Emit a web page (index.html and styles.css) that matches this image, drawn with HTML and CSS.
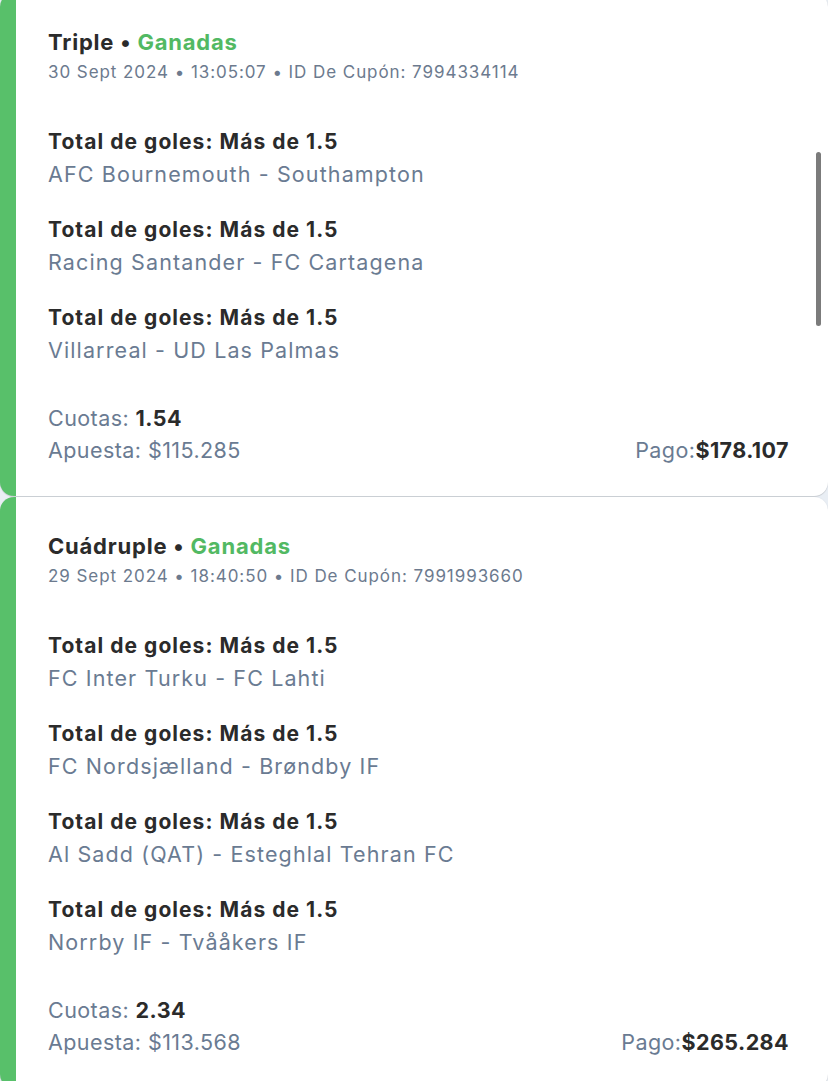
FILE: index.html
```html
<!DOCTYPE html>
<html lang="es">
<head>
<meta charset="utf-8">
<link rel="stylesheet" href="styles.css">
</head>
<body>
<div class="list">
  <section class="card">
    <h2 class="title">Triple • <span class="won">Ganadas</span></h2>
    <p class="meta">30 Sept 2024 • 13:05:07 • ID De Cupón: 7994334114</p>
    <div class="sels">
      <div class="sel"><div class="market">Total de goles: Más de 1.5</div><div class="event">AFC Bournemouth - Southampton</div></div>
      <div class="sel"><div class="market">Total de goles: Más de 1.5</div><div class="event">Racing Santander - FC Cartagena</div></div>
      <div class="sel"><div class="market">Total de goles: Más de 1.5</div><div class="event">Villarreal - UD Las Palmas</div></div>
    </div>
    <div class="foot">
      <div class="line">Cuotas: <b>1.54</b></div>
      <div class="row"><span class="line">Apuesta: $115.285</span><span class="line">Pago:<b>$178.107</b></span></div>
    </div>
  </section>
  <section class="card">
    <h2 class="title">Cuádruple • <span class="won">Ganadas</span></h2>
    <p class="meta">29 Sept 2024 • 18:40:50 • ID De Cupón: 7991993660</p>
    <div class="sels">
      <div class="sel"><div class="market">Total de goles: Más de 1.5</div><div class="event">FC Inter Turku - FC Lahti</div></div>
      <div class="sel"><div class="market">Total de goles: Más de 1.5</div><div class="event">FC Nordsjælland - Brøndby IF</div></div>
      <div class="sel"><div class="market">Total de goles: Más de 1.5</div><div class="event">Al Sadd (QAT) - Esteghlal Tehran FC</div></div>
      <div class="sel"><div class="market">Total de goles: Más de 1.5</div><div class="event">Norrby IF - Tvååkers IF</div></div>
    </div>
    <div class="foot">
      <div class="line">Cuotas: <b>2.34</b></div>
      <div class="row"><span class="line">Apuesta: $113.568</span><span class="line">Pago:<b>$265.284</b></span></div>
    </div>
  </section>
</div>
<div class="scrollbar"></div>
</body>
</html>
```
FILE: styles.css
```css
html, body {
  margin: 0;
  padding: 0;
}
body {
  background: #e9eef4;
  font-family: "Inter", "Liberation Sans", sans-serif;
  color: #2c2c2c;
  width: 828px;
  height: 1081px;
  overflow: hidden;
  position: relative;
}
.list {
  margin-top: -7px;
  display: flex;
  flex-direction: column;
  gap: 1px;
}
.card {
  background: #fff;
  border-left: 16px solid #58c06a;
  border-radius: 14px;
  padding: 34px 39px 30px 32px;
  box-shadow: 0 1px 1px rgba(0,0,0,0.12), 0 0 2px rgba(0,0,0,0.06);
}
.title {
  margin: 0;
  font-size: 22px;
  line-height: 30px;
  font-weight: 700;
  letter-spacing: 0.036em;
  color: #2b2b2b;
}
.won {
  color: #52b963;
}
.meta {
  margin: 0;
  font-size: 17px;
  line-height: 30px;
  letter-spacing: 0.055em;
  color: #6c7a8e;
}
.sels {
  margin-top: 39px;
  display: flex;
  flex-direction: column;
  gap: 24px;
}
.market {
  font-size: 21px;
  line-height: 32px;
  font-weight: 700;
  letter-spacing: 0.05em;
  color: #2b2b2b;
}
.event {
  font-size: 21.5px;
  line-height: 32px;
  letter-spacing: 0.052em;
  color: #6a7b92;
}
.foot {
  margin-top: 36px;
}
.line {
  font-size: 21.5px;
  line-height: 32px;
  letter-spacing: 0.02em;
  color: #6a7b92;
}
.line b {
  color: #2b2b2b;
  font-weight: 700;
}
.row {
  display: flex;
  justify-content: space-between;
}
.scrollbar {
  position: absolute;
  right: 7px;
  top: 152px;
  width: 5px;
  height: 174px;
  border-radius: 3px;
  background: #7b7b7b;
}
```
